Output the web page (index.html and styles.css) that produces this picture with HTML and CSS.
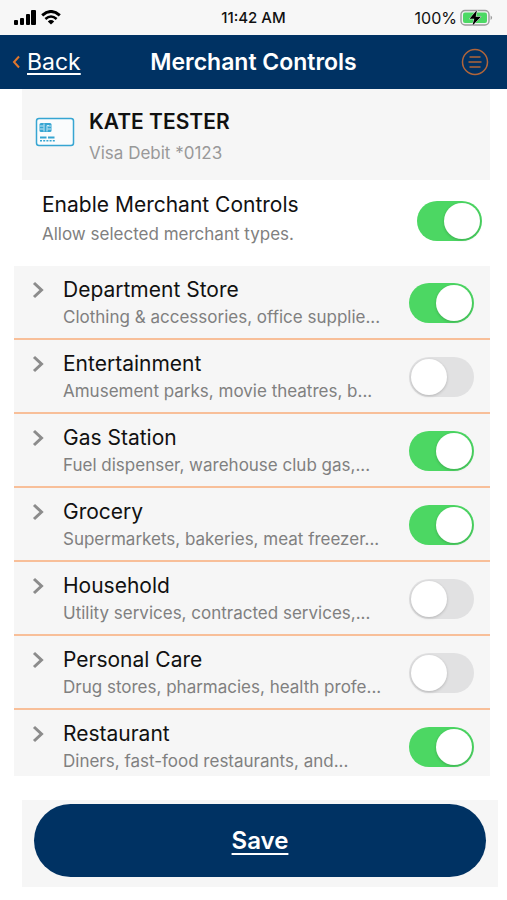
FILE: index.html
```
<!DOCTYPE html>
<html lang="en">
	<head>
		<meta charset="UTF-8">
		<meta name="viewport" content="width=device-width, initial-scale=1">
		<title>Merchant Controls</title>
		<link rel="stylesheet" href="styles.css">
	</head>
	<body>
		<div class="status">
			<div class="status-left">
				<svg width="23" height="15" viewBox="0 0 23 15" aria-hidden="true">
					<rect x="0" y="10" width="4" height="5" rx="1"/>
					<rect x="6" y="8" width="4" height="7" rx="1"/>
					<rect x="12" y="4" width="4" height="11" rx="1"/>
					<rect x="17" y="0" width="5" height="15" rx="1"/>
				</svg>
				<svg width="20" height="15" viewBox="0 0 20 15" aria-hidden="true">
					<path d="M1.200 5.300Q10 -2.300 18.800 5.300" fill="none" stroke="#000" stroke-width="3"/>
					<path d="M4.400 9Q10 4 15.600 9" fill="none" stroke="#000" stroke-width="2.600"/>
					<path d="M6.800 11.400Q10 8.600 13.200 11.400L10 14.600z"/>
				</svg>
			</div>
			<span class="time">11:42 AM</span>
			<div class="status-right">
				<span>100%</span>
				<svg width="33" height="18" viewBox="0 0 33 18" aria-hidden="true">
					<rect x="1" y="1.500" width="28" height="14.500" rx="4" fill="#f4f4f4" stroke="#9b9b9b" stroke-width="1.400"/>
					<rect x="3" y="3.500" width="24" height="10.500" rx="2" fill="#4cd964"/>
					<path d="M30.600 6.500q3 2 0 4.500z" fill="#9b9b9b"/>
					<path d="M17 1L9.500 9.800h4.800L12.300 16.800 21 7.800h-5.300z" stroke="#f4f4f4" stroke-width="1" paint-order="stroke"/>
				</svg>
			</div>
		</div>

		<header class="navbar">
			<a class="back" href="#">
				<svg width="8" height="14" viewBox="0 0 8 14" aria-hidden="true">
					<path d="M7 1.500L2 7l5 5.500" fill="none" stroke="#e0762c" stroke-width="2"/>
				</svg>
				<span>Back</span>
			</a>
			<h1>Merchant Controls</h1>
			<button class="menu" type="button" aria-label="Menu">
				<svg width="28" height="28" viewBox="0 0 28 28" aria-hidden="true">
					<g fill="none" stroke="#b0653a" stroke-width="1.500">
						<circle cx="14" cy="14" r="12.500"/>
						<path d="M8.500 9h11M7.500 14h13M8.500 19h11"/>
					</g>
				</svg>
			</button>
		</header>

		<main>
			<section class="card">
				<svg width="40" height="30" viewBox="0 0 40 30" aria-hidden="true">
					<rect x="1.500" y="1.500" width="37" height="27" rx="2.500" fill="#fafcfd" stroke="#36a5d2" stroke-width="1.500"/>
					<rect x="4.500" y="6" width="12" height="9" rx="1.500" fill="#36a5d2"/>
					<path d="M5 9h3.500M5 12h3.500M9 6.500v8M12.500 9h3.500M12.500 12h3.500M12 14.500V8.500h2" fill="none" stroke="#d9f0f9" stroke-width="0.900"/>
					<path d="M5 20.500h6.500M13 20.500h6.500" stroke="#36a5d2" stroke-width="2"/>
					<path d="M5 23.800h15" stroke="#36a5d2" stroke-width="1.600" stroke-dasharray="2 1.200"/>
				</svg>
				<div>
					<h2>KATE TESTER</h2>
					<p>Visa Debit *0123</p>
				</div>
			</section>

			<section class="enable">
				<label for="enable">
					<span class="name">Enable Merchant Controls</span>
					<span class="desc">Allow selected merchant types.</span>
				</label>
				<input type="checkbox" class="switch" id="enable" checked>
			</section>

			<ul class="types">
				<li>
					<svg class="arrow" viewBox="0 0 12 18" aria-hidden="true"><path d="M2 2l7.500 7L2 16"/></svg>
					<label for="department">
						<span class="name">Department Store</span>
						<span class="desc">Clothing &amp; accessories, office supplie...</span>
					</label>
					<input type="checkbox" class="switch" id="department" checked>
				</li>
				<li>
					<svg class="arrow" viewBox="0 0 12 18" aria-hidden="true"><path d="M2 2l7.500 7L2 16"/></svg>
					<label for="entertainment">
						<span class="name">Entertainment</span>
						<span class="desc">Amusement parks, movie theatres, b...</span>
					</label>
					<input type="checkbox" class="switch" id="entertainment">
				</li>
				<li>
					<svg class="arrow" viewBox="0 0 12 18" aria-hidden="true"><path d="M2 2l7.500 7L2 16"/></svg>
					<label for="gas">
						<span class="name">Gas Station</span>
						<span class="desc">Fuel dispenser, warehouse club gas,...</span>
					</label>
					<input type="checkbox" class="switch" id="gas" checked>
				</li>
				<li>
					<svg class="arrow" viewBox="0 0 12 18" aria-hidden="true"><path d="M2 2l7.500 7L2 16"/></svg>
					<label for="grocery">
						<span class="name">Grocery</span>
						<span class="desc">Supermarkets, bakeries, meat freezer...</span>
					</label>
					<input type="checkbox" class="switch" id="grocery" checked>
				</li>
				<li>
					<svg class="arrow" viewBox="0 0 12 18" aria-hidden="true"><path d="M2 2l7.500 7L2 16"/></svg>
					<label for="household">
						<span class="name">Household</span>
						<span class="desc">Utility services, contracted services,...</span>
					</label>
					<input type="checkbox" class="switch" id="household">
				</li>
				<li>
					<svg class="arrow" viewBox="0 0 12 18" aria-hidden="true"><path d="M2 2l7.500 7L2 16"/></svg>
					<label for="personal">
						<span class="name">Personal Care</span>
						<span class="desc">Drug stores, pharmacies, health profe...</span>
					</label>
					<input type="checkbox" class="switch" id="personal">
				</li>
				<li>
					<svg class="arrow" viewBox="0 0 12 18" aria-hidden="true"><path d="M2 2l7.500 7L2 16"/></svg>
					<label for="restaurant">
						<span class="name">Restaurant</span>
						<span class="desc">Diners, fast-food restaurants, and...</span>
					</label>
					<input type="checkbox" class="switch" id="restaurant" checked>
				</li>
			</ul>
		</main>

		<footer class="actions">
			<button class="save" type="button">Save</button>
		</footer>
	</body>
</html>
```
FILE: styles.css
```
*{margin: 0;padding: 0;box-sizing: border-box;}
body{
	background: #fff;
	color: #111;
	font-family: Inter, "Liberation Sans", sans-serif;
}
svg{
	display: block;
	flex: none;
}
.status{
	display: grid;
	grid-template-columns: 1fr auto 1fr;
	align-items: center;
	height: 35px;
	padding: 0 14px;
	background: #f7f7f7;
	font-size: 15px;
}
.status-left{
	display: flex;
	gap: 4px;
}
.status-right{
	display: flex;
	justify-content: flex-end;
	align-items: center;
	gap: 3px;
	font-size: 16px;
}
.time{
	font-weight: 500;
}
.navbar{
	display: grid;
	grid-template-columns: 1fr auto 1fr;
	align-items: center;
	height: 54px;
	padding: 0 12px;
	background: #003263;
	color: #fff;
}
.back{
	display: flex;
	align-items: center;
	gap: 7px;
	color: #fff;
	font-size: 23px;
	text-decoration: none;
}
.back span{
	text-decoration: underline;
	text-decoration-thickness: 2px;
	text-underline-offset: 3px;
}
.navbar h1{
	font-size: 23px;
	font-weight: 600;
}
.menu{
	justify-self: end;
	margin-right: 6px;
	border: 0;
	background: none;
	cursor: pointer;
}
.card{
	display: flex;
	align-items: flex-start;
	gap: 14px;
	margin: 0 17px 0 22px;
	padding: 17px 13px 11px;
	background: #f6f6f6;
}
.card svg{
	margin-top: 11px;
}
.card h2{
	font-size: 21px;
	font-weight: 600;
	line-height: 31px;
}
.card p{
	color: #999;
	font-size: 17px;
	line-height: 32px;
}
.enable{
	display: flex;
	align-items: center;
	justify-content: space-between;
	padding: 11px 25px 16px 42px;
}
.name, .desc{
	display: block;
	white-space: nowrap;
}
.name{
	font-size: 21px;
	line-height: 28px;
}
.desc{
	color: #808080;
	font-size: 17px;
	line-height: 26px;
}
.enable .desc{
	line-height: 31px;
}
.types{
	margin: 0 17px 0 14px;
	background: #f6f6f6;
	list-style: none;
}
.types li{
	display: flex;
	align-items: center;
	padding: 10px 16px 8px 18px;
	border-bottom: 2px solid #f8bf99;
}
.types li:last-child{
	padding-bottom: 2px;
	border-bottom: 0;
}
.types label{
	flex: 1;
	min-width: 0;
}
.arrow{
	align-self: flex-start;
	width: 12px;
	height: 18px;
	margin: 5px 19px 0 0;
	fill: none;
	stroke: #8c8c8c;
	stroke-width: 3;
}
.switch{
	flex: none;
	appearance: none;
	width: 65px;
	height: 40px;
	padding: 2px;
	border-radius: 20px;
	background: #e1e1e2;
	cursor: pointer;
}
.switch::before{
	content: "";
	display: block;
	width: 36px;
	height: 36px;
	border-radius: 50%;
	background: #fff;
	box-shadow: 0 1px 3px rgba(0, 0, 0, .2);
}
.switch:checked{
	background: #4cd763;
}
.switch:checked::before{
	margin-left: auto;
}
.actions{
	margin: 24px 9px 14px 22px;
	padding: 4px 12px 10px;
	background: #f6f6f6;
}
.save{
	width: 100%;
	height: 73px;
	border: 0;
	border-radius: 37px;
	background: #003263;
	color: #fff;
	font-family: inherit;
	font-size: 24px;
	font-weight: 600;
	text-decoration: underline;
	text-decoration-thickness: 2px;
	text-underline-offset: 4px;
	cursor: pointer;
}
```
